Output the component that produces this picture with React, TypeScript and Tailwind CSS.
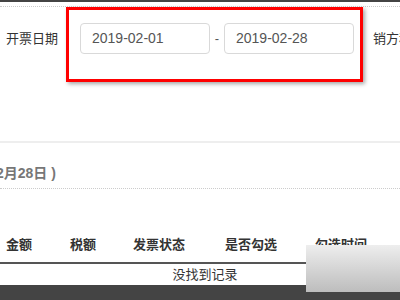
import React from 'react';

const font = { fontFamily: '"Liberation Sans", "Noto Sans CJK SC", sans-serif' };

const DateInput: React.FC<{ value: string }> = ({ value }) => (
  <div className="shrink-0 w-[130px] h-[31px] border border-[#d9d9d9] rounded-[4px] bg-white flex items-center px-[11px] text-[14px] text-[#555]">
    {value}
  </div>
);

const headers = [
  { label: '金额', w: 'w-[64px]' },
  { label: '税额', w: 'w-[63px]' },
  { label: '发票状态', w: 'w-[92px]' },
  { label: '是否勾选', w: 'w-[90px]' },
  { label: '勾选时间', w: 'w-[80px]' },
];

export default function App() {
  return (
    <div className="relative w-[400px] h-[300px] overflow-hidden bg-white flex flex-col" style={font}>
      <div className="h-[2px] bg-[#444] shrink-0" />
      <div className="mt-[4px] border-t border-dotted border-[#ccc]" />

      {/* filter row */}
      <div className="flex items-center h-[31px] mt-[16px] pl-[6px] whitespace-nowrap">
        <span className="shrink-0 text-[13px] text-[#333] w-[74px]">开票日期</span>
        <DateInput value="2019-02-01" />
        <span className="shrink-0 w-[14px] text-center text-[13px] text-[#555]">-</span>
        <DateInput value="2019-02-28" />
        <span className="shrink-0 ml-[19px] text-[13px] text-[#333]">销方税号</span>
      </div>

      <div className="mt-[87px] border-t-2 border-[#eee]" />

      <div className="mt-[20px] h-[20px] flex items-center -ml-[4px] text-[14px] font-bold text-[#777] whitespace-nowrap">
        2月28日 )
      </div>

      <div className="mt-[5px] border-t border-dotted border-[#ccc]" />

      {/* table */}
      <div className="mt-[46px] flex items-center h-[20px] pl-[6px] text-[13px] font-bold text-[#333] whitespace-nowrap">
        {headers.map(h => (
          <span key={h.label} className={`shrink-0 ${h.w}`}>{h.label}</span>
        ))}
      </div>
      <div className="mt-[7px] border-t-2 border-[#555]" />
      <div className="h-[21px] flex items-center justify-center text-[13px] text-[#333] pl-[10px]">没找到记录</div>
      <div className="flex-1 bg-[#444]" />

      {/* annotation box */}
      <div className="absolute left-[66px] top-[7px] w-[297px] h-[75px] border-[3px] border-[#ff0000] shadow-[2px_2px_4px_rgba(0,0,0,0.35)]" />
      {/* watermark patch */}
      <div className="absolute left-[306px] top-[245px] w-[94px] h-[47px] bg-gradient-to-b from-[#eeeeee] to-[#bdbdbd]" />
    </div>
  );
}
